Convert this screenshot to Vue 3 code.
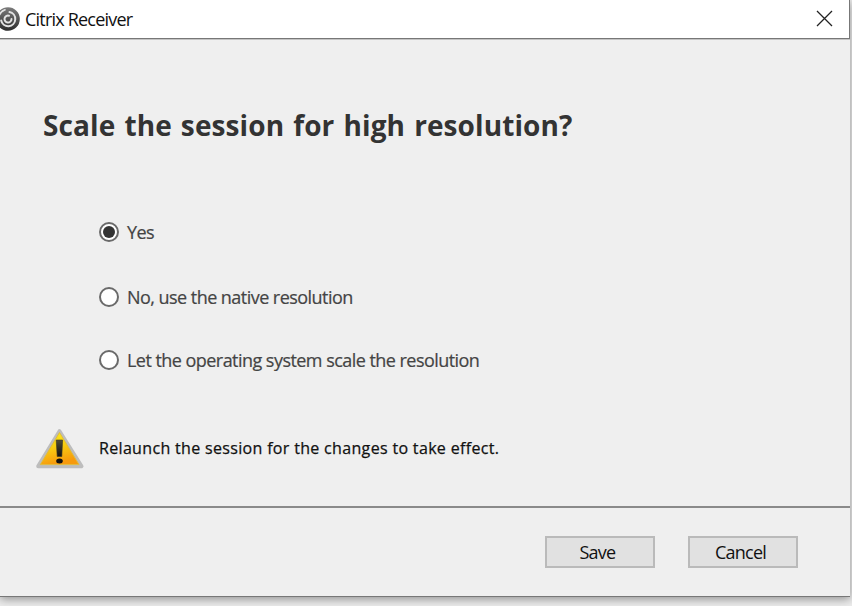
<template>
  <div class="desktop">
    <div class="window">
      <header class="titlebar">
        <svg class="logo" width="21" height="24" viewBox="0 0 21 24">
          <defs>
            <linearGradient id="logoFill" x1="0" y1="0" x2="0" y2="1">
              <stop offset="0" stop-color="#7c7c7c" />
              <stop offset="1" stop-color="#2c2c2c" />
            </linearGradient>
          </defs>
          <circle cx="8" cy="12" r="11.8" fill="url(#logoFill)" />
          <g fill="none" stroke="#e2e2e2" stroke-linecap="round">
            <path d="M9 8.7a3.5 3.5 0 1 0 2.5 3.3" stroke-width="2" />
            <path d="M9.5 5.1a7.1 7.1 0 1 1-8.3 8.4" stroke-width="2" />
            <path d="M-1 9a9.6 9.6 0 0 1 6-6.2" stroke-width="1.6" />
          </g>
        </svg>
        <span class="title">Citrix Receiver</span>
        <button class="close" aria-label="Close">
          <svg width="17" height="17" viewBox="0 0 17 17">
            <path d="M1 1l15 15M16 1L1 16" fill="none" stroke="#222" stroke-width="1.3" />
          </svg>
        </button>
      </header>

      <main class="content">
        <h1 class="heading">Scale the session for high resolution?</h1>
        <div class="options">
          <div
            v-for="option in options"
            :key="option.id"
            class="option"
            @click="selected = option.id"
          >
            <span class="radio" :class="{ checked: selected === option.id }"></span>
            <span class="label">{{ option.label }}</span>
          </div>
        </div>
        <div class="notice">
          <svg class="warning" width="50" height="42" viewBox="0 0 50 42">
            <defs>
              <linearGradient id="warnFill" x1="0" y1="0" x2="0.3" y2="1">
                <stop offset="0" stop-color="#fff21a" />
                <stop offset="0.5" stop-color="#f8cf12" />
                <stop offset="1" stop-color="#f79a0c" />
              </linearGradient>
              <linearGradient id="markFill" x1="0" y1="0" x2="0" y2="1">
                <stop offset="0" stop-color="#504c38" />
                <stop offset="1" stop-color="#111" />
              </linearGradient>
            </defs>
            <path d="M24.5 3.2L46.5 38.2H3.2z" fill="#b4b4b4" stroke="#bdbdbd" stroke-width="4" stroke-linejoin="round" />
            <path d="M24.5 4.5L44 36.6H5.3z" fill="url(#warnFill)" stroke="#e0bc40" stroke-width="1" stroke-linejoin="round" />
            <path d="M21.2 12h6.4l-0.8 16.5h-4.6z" fill="url(#markFill)" stroke="#39351f" stroke-width="0.6" stroke-linejoin="round" />
            <ellipse cx="24.5" cy="33" rx="3.3" ry="2.5" fill="#111" />
          </svg>
          <span class="notice-text">Relaunch the session for the changes to take effect.</span>
        </div>
      </main>

      <footer class="footer">
        <button class="btn">Save</button>
        <button class="btn">Cancel</button>
      </footer>
    </div>
  </div>
</template>

<script setup>
import { ref } from 'vue'

const selected = ref('yes')

const options = [
  { id: 'yes', label: 'Yes' },
  { id: 'native', label: 'No, use the native resolution' },
  { id: 'system', label: 'Let the operating system scale the resolution' }
]
</script>

<style>
body {
  margin: 0;
  overflow: hidden;
}
</style>

<style scoped>
.desktop {
  width: 852px;
  height: 606px;
  overflow: hidden;
  background: #ececec;
  font-family: "Open Sans", "Noto Sans", sans-serif;
}

.window {
  box-sizing: border-box;
  display: flex;
  flex-direction: column;
  width: 850px;
  height: 597px;
  background: #efefef;
  border-bottom: 1px solid #777;
  box-shadow: 0 2px 9px rgba(0, 0, 0, 0.4);
}

.titlebar {
  box-sizing: border-box;
  display: flex;
  align-items: center;
  height: 39px;
  flex-shrink: 0;
  padding-right: 16px;
  background: #fff;
  border-right: 1px solid #777;
  border-bottom: 1px solid #777;
  box-shadow: 0 1px 0 #c4c4c4;
}

.logo {
  margin-top: -1px;
}

.title {
  margin: 0 0 1px 4px;
  font-size: 18px;
  line-height: 24px;
  letter-spacing: -0.8px;
  color: #111;
  white-space: nowrap;
}

.close {
  display: flex;
  margin: 0 0 1px auto;
  padding: 0;
  border: 0;
  background: none;
}

.content {
  height: 467px;
  flex-shrink: 0;
}

.heading {
  margin: 66px 0 0 43px;
  font-size: 28px;
  font-weight: 700;
  line-height: 40px;
  letter-spacing: 0.1px;
  word-spacing: 1.7px;
  color: #333;
  white-space: nowrap;
}

.options {
  padding: 76px 0 0 99px;
}

.option {
  display: flex;
  align-items: center;
  height: 22px;
  margin-bottom: 42px;
}

.option:first-child {
  margin-bottom: 43px;
}

.option:nth-child(2) {
  margin-bottom: 41px;
}

.option:last-child {
  margin-bottom: 0;
}

.radio {
  box-sizing: border-box;
  display: flex;
  align-items: center;
  justify-content: center;
  width: 20px;
  height: 20px;
  border: 2px solid #6a6a6a;
  border-radius: 50%;
  background: #fff;
}

.radio.checked::after {
  content: "";
  width: 12px;
  height: 12px;
  border-radius: 50%;
  background: #333;
}

.label {
  margin-left: 8px;
  font-size: 18px;
  line-height: 22px;
  letter-spacing: -0.54px;
  color: #444;
  -webkit-text-stroke: 0.2px #444;
  white-space: nowrap;
}

.notice {
  display: flex;
  align-items: center;
  margin: 57px 0 0 35px;
}

.notice-text {
  margin: -3px 0 0 14px;
  font-size: 16px;
  line-height: 22px;
  letter-spacing: 0.33px;
  color: #111;
  -webkit-text-stroke: 0.25px #111;
  white-space: nowrap;
}

.footer {
  box-sizing: border-box;
  display: flex;
  justify-content: flex-end;
  flex: 1;
  gap: 33px;
  padding: 28px 52px 0 0;
  border-top: 2px solid #8a8a8a;
}

.btn {
  box-sizing: border-box;
  width: 110px;
  height: 32px;
  padding: 0 5px 0 0;
  border: 2px solid #bababa;
  background: #e1e1e1;
  color: #111;
  font-family: inherit;
  font-size: 18px;
  line-height: 22px;
  letter-spacing: -0.75px;
}
</style>
